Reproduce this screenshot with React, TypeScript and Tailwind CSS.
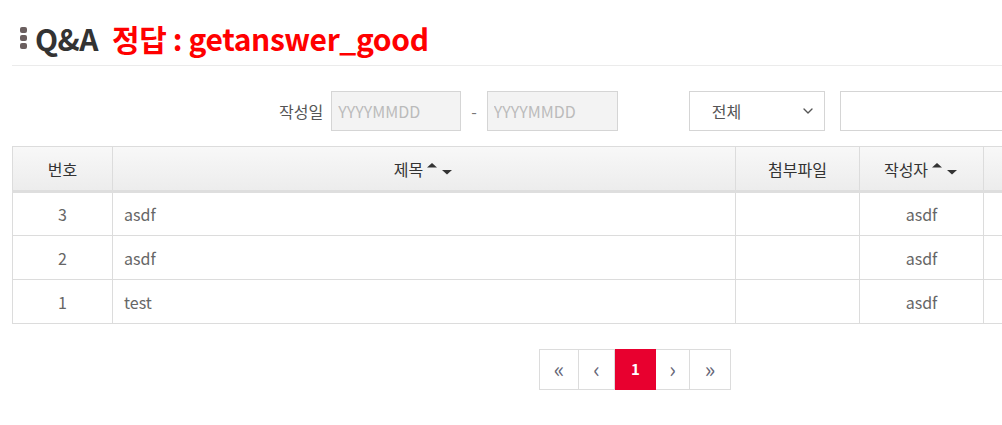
import { ChevronDown } from 'lucide-react'

interface Post {
  no: number
  title: string
  file: string
  writer: string
}

const posts: Post[] = [
  { no: 3, title: 'asdf', file: '', writer: 'asdf' },
  { no: 2, title: 'asdf', file: '', writer: 'asdf' },
  { no: 1, title: 'test', file: '', writer: 'asdf' },
]

function SortArrows() {
  return (
    <svg width="28" height="14" viewBox="0 0 28 14" className="ml-[3px] inline-block">
      <path d="M1 5.5 L6 1 L11 5.5 Z" fill="#333" />
      <path d="M16 8 L21 12.5 L26 8 Z" fill="#333" />
    </svg>
  )
}

function Dots() {
  return (
    <div className="flex flex-col gap-[2px] mr-[8px]">
      <span className="block w-[7px] h-[6px] rounded-[2px] bg-[#6b5f5f]" />
      <span className="block w-[7px] h-[6px] rounded-[2px] bg-[#6b5f5f]" />
      <span className="block w-[7px] h-[6px] rounded-[2px] bg-[#6b5f5f]" />
    </div>
  )
}

export default function App() {
  const font = { fontFamily: '"Noto Sans CJK KR", "Noto Sans", sans-serif' }

  return (
    <div className="w-[1002px] h-[425px] overflow-hidden bg-white" style={font}>
      <div className="w-[1300px] pl-[12px]">
        {/* Title */}
        <div className="flex items-center pl-[8px] pt-[18px] pb-[7px] border-b border-[#ebebeb]">
          <Dots />
          <h2 className="text-[30px] font-bold leading-[40px] tracking-[-0.5px] text-[#333]">Q&amp;A</h2>
          <span className="ml-[14px] text-[30px] font-bold leading-[40px] tracking-[-0.4px] text-[#ff0000]">
            정답 : getanswer_good
          </span>
        </div>

        {/* Search */}
        <div className="flex items-center mt-[25px] pl-[267px] text-[16px]">
          <span className="text-[#555] mr-[8px]">작성일</span>
          <input
            placeholder="YYYYMMDD"
            className="w-[130px] h-[40px] px-[6px] bg-[#f3f3f3] border border-[#d5d5d5] text-[16px] placeholder:text-[#bbb] outline-none"
          />
          <span className="mx-[10px] text-[#777]">-</span>
          <input
            placeholder="YYYYMMDD"
            className="w-[131px] h-[40px] px-[6px] bg-[#f3f3f3] border border-[#d5d5d5] text-[16px] placeholder:text-[#bbb] outline-none"
          />
          <div className="ml-[71px] w-[136px] h-[40px] border border-[#d5d5d5] flex items-center justify-between pl-[22px] pr-[8px]">
            <span className="text-[#555]">전체</span>
            <ChevronDown className="w-[16px] h-[16px] text-[#555]" strokeWidth={2} />
          </div>
          <input className="ml-[15px] w-[240px] h-[40px] border border-[#d5d5d5] outline-none" />
        </div>

        {/* Table */}
        <table className="mt-[15px] border-collapse text-[16px]">
          <thead>
            <tr className="h-[45px] bg-gradient-to-b from-[#f8f8f8] to-[#ececec] text-[#333]">
              <th className="w-[100px] border border-[#dcdcdc] border-b-[3px] border-b-[#dedede] font-normal">번호</th>
              <th className="w-[623px] border border-[#dcdcdc] border-b-[3px] border-b-[#dedede] font-normal">
                <span className="inline-flex items-center">제목<SortArrows /></span>
              </th>
              <th className="w-[124px] border border-[#dcdcdc] border-b-[3px] border-b-[#dedede] font-normal">첨부파일</th>
              <th className="w-[124px] border border-[#dcdcdc] border-b-[3px] border-b-[#dedede] font-normal">
                <span className="inline-flex items-center">작성자<SortArrows /></span>
              </th>
              <th className="w-[240px] border border-[#dcdcdc] border-b-[3px] border-b-[#dedede] font-normal"></th>
            </tr>
          </thead>
          <tbody className="text-[#666]">
            {posts.map(p => (
              <tr key={p.no} className="h-[44px]">
                <td className="border border-[#dcdcdc] text-center">{p.no}</td>
                <td className="border border-[#dcdcdc] pl-[11px]">{p.title}</td>
                <td className="border border-[#dcdcdc] text-center">{p.file}</td>
                <td className="border border-[#dcdcdc] text-center">{p.writer}</td>
                <td className="border border-[#dcdcdc] text-center"></td>
              </tr>
            ))}
          </tbody>
        </table>

        {/* Pagination */}
        <div className="flex mt-[25px] ml-[527px] text-[15px]">
          <button className="w-[40px] h-[41px] border border-[#dcdcdc] text-[#667] text-[22px] leading-none pb-[3px] flex items-center justify-center">«</button>
          <button className="w-[36px] h-[41px] border border-l-0 border-[#dcdcdc] text-[#667] text-[22px] leading-none pb-[3px] flex items-center justify-center">‹</button>
          <button className="w-[41px] h-[41px] bg-[#e8002f] text-white font-bold flex items-center justify-center">1</button>
          <button className="w-[34px] h-[41px] border border-l-0 border-[#dcdcdc] text-[#667] text-[22px] leading-none pb-[3px] flex items-center justify-center">›</button>
          <button className="w-[41px] h-[41px] border border-l-0 border-[#dcdcdc] text-[#667] text-[22px] leading-none pb-[3px] flex items-center justify-center">»</button>
        </div>
      </div>
    </div>
  )
}
